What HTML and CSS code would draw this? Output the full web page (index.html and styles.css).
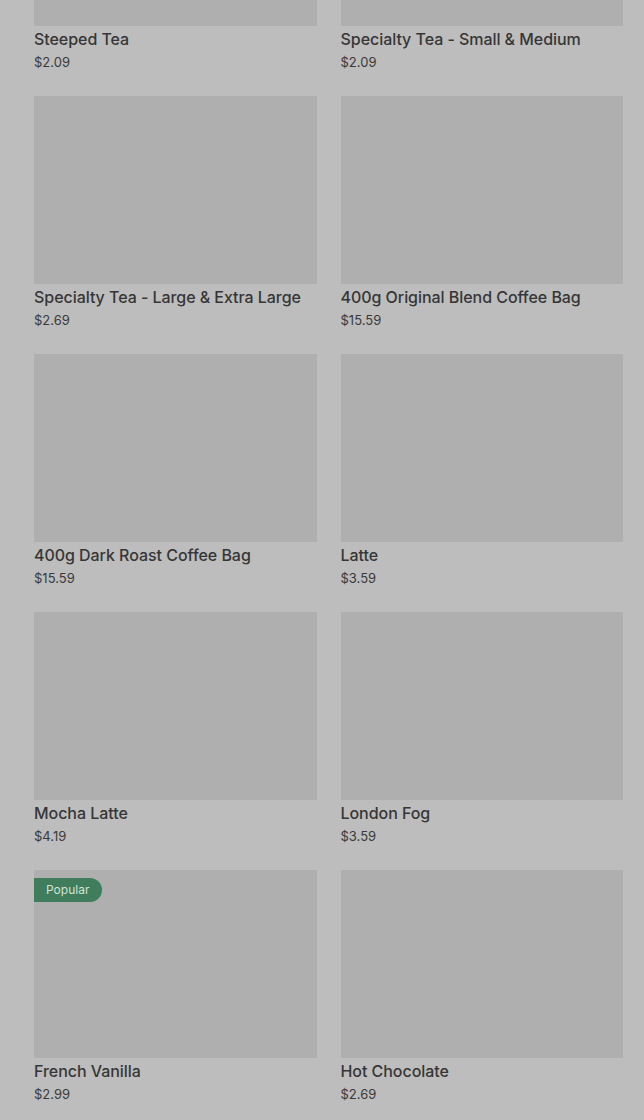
FILE: index.html
```html
<!DOCTYPE html>
<html lang="en">
<head>
    <meta charset="UTF-8">
    <meta name="viewport" content="width=device-width, initial-scale=1.0">
    <title>Menu</title>
    <link rel="stylesheet" href="styles.css">
</head>
<body>

    <div class="menu-grid">
        <div class="item">
            <div class="item-image"></div>
            <h3 class="item-name">Steeped Tea</h3>
            <p class="item-price">$2.09</p>
        </div>
        <div class="item">
            <div class="item-image"></div>
            <h3 class="item-name">Specialty Tea - Small &amp; Medium</h3>
            <p class="item-price">$2.09</p>
        </div>
        <div class="item">
            <div class="item-image"></div>
            <h3 class="item-name">Specialty Tea - Large &amp; Extra Large</h3>
            <p class="item-price">$2.69</p>
        </div>
        <div class="item">
            <div class="item-image"></div>
            <h3 class="item-name">400g Original Blend Coffee Bag</h3>
            <p class="item-price">$15.59</p>
        </div>
        <div class="item">
            <div class="item-image"></div>
            <h3 class="item-name">400g Dark Roast Coffee Bag</h3>
            <p class="item-price">$15.59</p>
        </div>
        <div class="item">
            <div class="item-image"></div>
            <h3 class="item-name">Latte</h3>
            <p class="item-price">$3.59</p>
        </div>
        <div class="item">
            <div class="item-image"></div>
            <h3 class="item-name">Mocha Latte</h3>
            <p class="item-price">$4.19</p>
        </div>
        <div class="item">
            <div class="item-image"></div>
            <h3 class="item-name">London Fog</h3>
            <p class="item-price">$3.59</p>
        </div>
        <div class="item">
            <div class="item-image">
                <span class="badge">Popular</span>
            </div>
            <h3 class="item-name">French Vanilla</h3>
            <p class="item-price">$2.99</p>
        </div>
        <div class="item">
            <div class="item-image"></div>
            <h3 class="item-name">Hot Chocolate</h3>
            <p class="item-price">$2.69</p>
        </div>
    </div>

</body>
</html>
```

FILE: styles.css
```css
body {
    font-family: Inter, Roboto, "Liberation Sans", sans-serif;
    background-color: #bdbdbd;
    margin: 0;
    padding: 0 21px 0 34px;
    color: #333;
    overflow: hidden;
}
.menu-grid {
    display: grid;
    grid-template-columns: 1fr 1fr;
    column-gap: 24px;
    row-gap: 25px;
    margin-top: -162px;
}
.item-image {
    position: relative;
    height: 188px;
    background-color: #afafaf;
}
.item-name {
    margin: 3px 0 0;
    font-size: 16px;
    font-weight: 500;
    line-height: 20px;
    letter-spacing: -0.05px;
    color: #363636;
}
.item-price {
    margin: 4px 0 0;
    font-size: 13px;
    line-height: 18px;
    color: #3a3a3a;
}
.badge {
    position: absolute;
    top: 8px;
    left: 0;
    padding: 0 13px 0 12px;
    height: 24px;
    line-height: 24px;
    font-size: 12px;
    color: #cfe3d6;
    background-color: #3f7d5c;
    border-radius: 0 12px 12px 0;
}
```
